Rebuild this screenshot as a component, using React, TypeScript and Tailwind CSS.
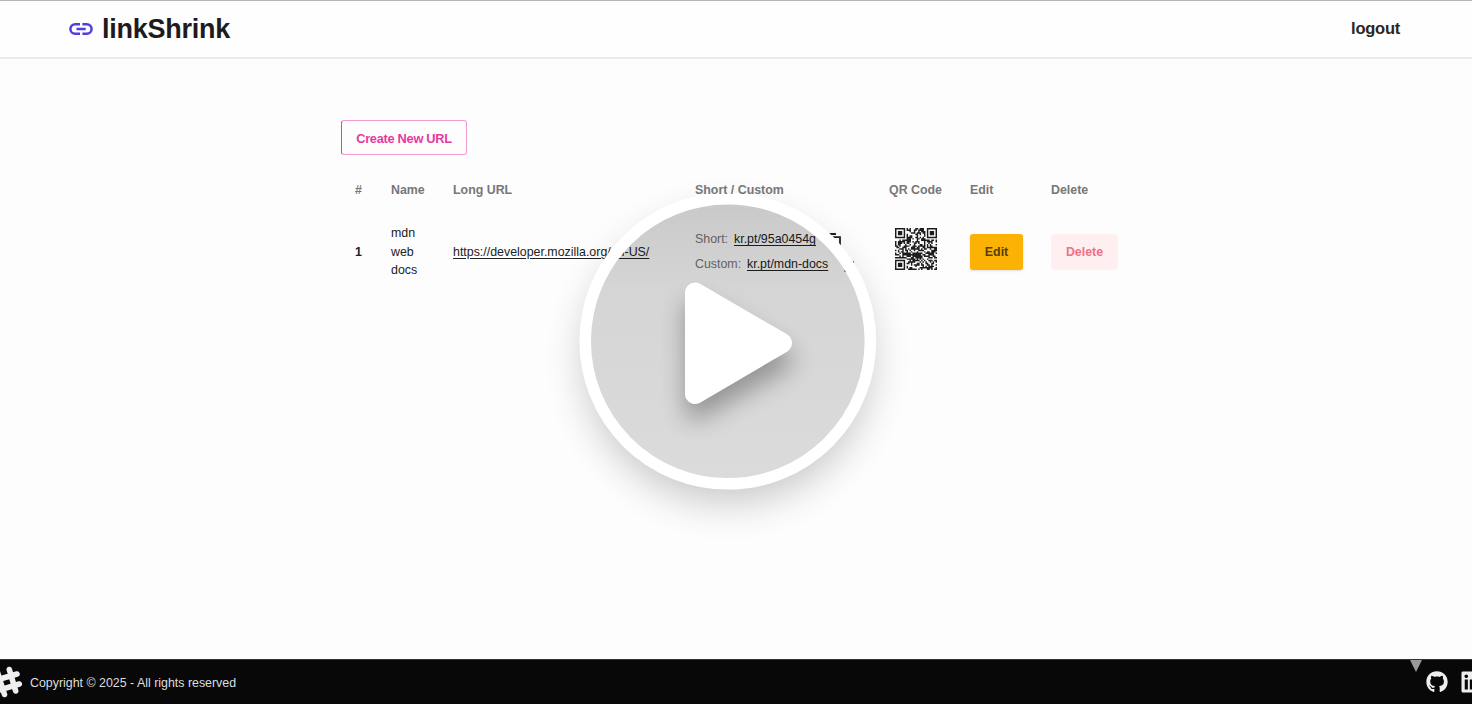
import React from "react";
import { FaGithub, FaLinkedin } from "react-icons/fa";

const SIZE = 29;

function isFinder(x: number, y: number, ox: number, oy: number): boolean | null {
  const dx = x - ox;
  const dy = y - oy;
  if (dx < -1 || dy < -1 || dx > 7 || dy > 7) return null;
  if (dx < 0 || dy < 0 || dx > 6 || dy > 6) return false;
  const ring = Math.max(Math.abs(dx - 3), Math.abs(dy - 3));
  return ring !== 2;
}

function buildModules(): string {
  let seed = 4177;
  let d = "";
  for (let y = 0; y < SIZE; y++) {
    for (let x = 0; x < SIZE; x++) {
      seed = (seed * 48271) % 2147483647;
      let on = seed / 2147483647 < 0.54;
      for (const [ox, oy] of [[0, 0], [SIZE - 7, 0], [0, SIZE - 7]]) {
        const f = isFinder(x, y, ox, oy);
        if (f !== null) on = f;
      }
      if (Math.hypot(x - 15.5, y - 18.5) < 2.2 || Math.hypot(x - 9, y - 18) < 1.8) on = true;
      if (on) d += `M${x} ${y}h1v1h-1z`;
    }
  }
  return d;
}

const modules = buildModules();

function QrCode() {
  return (
    <svg viewBox="0 0 29 29" className="h-[42px] w-[42px]" fill="#1c1c1c">
      <path d={modules} />
    </svg>
  );
}

function LinkIcon() {
  return (
    <svg viewBox="0 0 24 14" className="h-[14px] w-6" fill="none" stroke="#4f3fdc" strokeWidth="2.5">
      <path d="M11 2.2H6.2a4.8 4.8 0 0 0 0 9.6H11M13.4 2.2h4.4a4.8 4.8 0 0 1 0 9.6h-4.4M7.5 7h9.2" />
    </svg>
  );
}

function HashIcon() {
  return (
    <svg viewBox="0 0 36 36" className="-ml-[13px] h-9 w-9 shrink-0" fill="none" stroke="#eee" strokeWidth="5.6" strokeLinecap="round">
      <path d="M22.3 5.5L28.7 27M10.7 9L17.5 30.5M30 10L8 16.5M32.3 20L11 26.5" />
    </svg>
  );
}

function CopyIcon() {
  return (
    <svg viewBox="0 0 14 14" className="h-[14px] w-[14px] shrink-0" fill="none" stroke="#222" strokeWidth="1.8">
      <path d="M1 1h7M4.5 4.2h7.5V13H4.5z" />
    </svg>
  );
}

function PlayOverlay() {
  return (
    <svg viewBox="0 0 440 460" className="pointer-events-none absolute top-[112px] left-[508px] h-[460px] w-[440px]">
      <defs>
        <filter id="ringShadow" x="-60%" y="-60%" width="220%" height="220%">
          <feGaussianBlur stdDeviation="20" />
        </filter>
        <filter id="playShadow" x="-60%" y="-60%" width="220%" height="220%">
          <feGaussianBlur stdDeviation="12" />
        </filter>
        <linearGradient id="disc" x1="0" y1="0" x2="0" y2="1">
          <stop offset="0" stopColor="#000" stopOpacity="0.205" />
          <stop offset="0.3" stopColor="#000" stopOpacity="0.16" />
          <stop offset="1" stopColor="#000" stopOpacity="0.135" />
        </linearGradient>
        <mask id="outside" maskUnits="userSpaceOnUse" x="0" y="0" width="440" height="460">
          <rect width="440" height="460" fill="#fff" />
          <circle cx="219.8" cy="229.2" r="143" fill="#000" />
        </mask>
      </defs>
      <g mask="url(#outside)">
        <circle cx="219.8" cy="247" r="143" fill="#000" opacity="0.22" filter="url(#ringShadow)" />
      </g>
      <circle cx="219.8" cy="229.2" r="138" fill="url(#disc)" />
      <circle cx="219.8" cy="229.2" r="142.6" fill="none" stroke="#fff" strokeWidth="11.6" />
      <path d="M187 182L275 232L187 282z" transform="translate(0 16)" fill="#000" stroke="#000" strokeWidth="20" strokeLinejoin="round" opacity="0.31" filter="url(#playShadow)" />
      <path d="M187 180.5L274 231L187 282z" fill="#fff" stroke="#fff" strokeWidth="20" strokeLinejoin="round" />
    </svg>
  );
}

const columns = "grid grid-cols-[36px_62px_242px_194px_81px_81px_68px] pl-[14px]";

export default function App() {
  return (
    <div className="relative flex h-[704px] w-[1472px] flex-col overflow-hidden bg-[#fdfdfd] font-['Liberation_Sans',Arial,sans-serif] text-[12.4px] text-[#222]">
      <header className="flex h-[59px] shrink-0 items-center justify-between border-t border-b-2 border-t-[#b4b4b4] border-b-[#ececec] bg-[#fefefe] pr-[72px] pl-[69px]">
        <div className="flex items-center gap-[9px]">
          <LinkIcon />
          <span className="text-[27px] leading-8 font-bold tracking-[-0.25px] text-[#211a1c]">linkShrink</span>
        </div>
        <a className="mb-[2px] text-[16.5px] font-bold tracking-[-0.25px] text-[#2b2627]">logout</a>
      </header>

      <main className="flex-1 pt-[61px] pl-[341px]">
        <button className="block h-[35px] w-[126px] rounded-[3px] border border-[#f39bd0] border-l-[#e83fa8] pt-[2px] text-[12.8px] font-bold tracking-[-0.28px] whitespace-nowrap text-[#e6399f]">
          Create New URL
        </button>

        <div className={`${columns} relative z-10 h-[69px] items-center pt-px font-bold text-[#777]`}>
          <span>#</span>
          <span>Name</span>
          <span>Long URL</span>
          <span>Short / Custom</span>
          <span>QR Code</span>
          <span>Edit</span>
          <span>Delete</span>
        </div>

        <div className={`${columns} h-[56px] items-center`}>
          <span className="font-bold">1</span>
          <span className="w-8 leading-[18.5px]">mdn web docs</span>
          <a className="whitespace-nowrap underline underline-offset-2">https://developer.mozilla.org/en-US/</a>
          <div className="flex flex-col text-[#777]">
            <div className="flex h-[25px] items-center">
              <span className="w-[39px]">Short:</span>
              <a className="w-[94px] text-[#222] underline underline-offset-2">kr.pt/95a0454g</a>
              <CopyIcon />
            </div>
            <div className="flex h-[25px] items-center">
              <span className="w-[52px]">Custom:</span>
              <a className="w-[94px] text-[#222] underline underline-offset-2">kr.pt/mdn-docs</a>
              <CopyIcon />
            </div>
          </div>
          <div className="pb-[7px] pl-[6px]">
            <QrCode />
          </div>
          <button className="h-9 w-[53px] rounded-[3px] bg-[#fcb205] font-bold text-[#573d08] shadow-sm">Edit</button>
          <button className="h-9 w-[67px] rounded-[4px] bg-[#ffeff1] font-bold text-[#f0708a]">Delete</button>
        </div>
      </main>

      <footer className="flex h-[45px] shrink-0 items-center border-t border-[#333] bg-[#080808] text-[#ddd]">
        <HashIcon />
        <span className="mt-[2px] ml-[7px]">Copyright © 2025 - All rights reserved</span>
        <svg viewBox="0 0 12 12" className="mb-[33px] ml-auto h-3 w-3 shrink-0" fill="#999">
          <path d="M0 0h12L6 12z" />
        </svg>
        <FaGithub className="ml-1 h-[22px] w-[22px] shrink-0 text-[#eee]" />
        <div className="ml-3 w-3 overflow-hidden">
          <FaLinkedin className="h-[24px] w-[24px] rounded-[5px] text-[#eee]" />
        </div>
      </footer>

      <PlayOverlay />
    </div>
  );
}
